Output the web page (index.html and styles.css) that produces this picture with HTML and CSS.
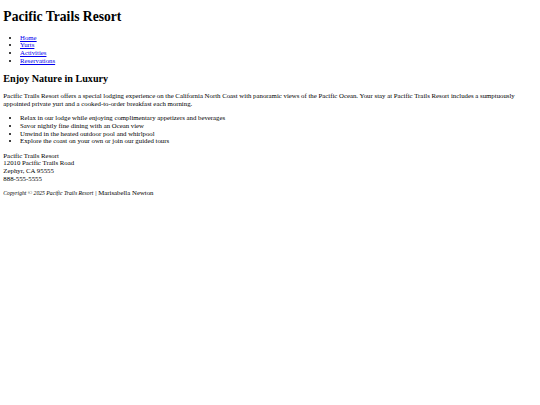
FILE: index.html
```html
<!DOCTYPE html>
<html lang="en">
<head>
<meta charset="utf-8">
<title>Pacific Trails Resort</title>
<link rel="stylesheet" href="styles.css">
</head>
<body class="page">
<header class="site-header">
<h1 class="site-title">Pacific Trails Resort</h1>
</header>
<nav class="site-nav">
<ul class="nav-list">
<li><a href="#">Home</a></li>
<li><a href="#">Yurts</a></li>
<li><a href="#">Activities</a></li>
<li><a href="#">Reservations</a></li>
</ul>
</nav>
<main class="content">
<h2 class="section-title">Enjoy Nature in Luxury</h2>
<p class="intro">Pacific Trails Resort offers a special lodging experience on the California North Coast with panoramic views of the Pacific Ocean. Your stay at Pacific Trails Resort includes a sumptuously appointed private yurt and a cooked-to-order breakfast each morning.</p>
<ul class="features">
<li>Relax in our lodge while enjoying complimentary appetizers and beverages</li>
<li>Savor nightly fine dining with an Ocean view</li>
<li>Unwind in the heated outdoor pool and whirlpool</li>
<li>Explore the coast on your own or join our guided tours</li>
</ul>
<div class="address">Pacific Trails Resort<br>12010 Pacific Trails Road<br>Zephyr, CA 95555<br>888-555-5555</div>
</main>
<footer class="site-footer">
<small class="copy"><i>Copyright &copy; 2025 Pacific Trails Resort</i></small> | Marisabella Newton
</footer>
</body>
</html>
```
FILE: styles.css
```css
html {
  background: #ffffff;
}
.page {
  margin: 3.33px;
  font-family: "Liberation Serif", "Times New Roman", serif;
  font-size: 6.8px;
  line-height: 7.67px;
  color: #000000;
}
.site-title {
  font-size: 13.6px;
  line-height: 15.43px;
  font-weight: bold;
  margin: 5.9px 0 8.94px;
}
.nav-list,
.features {
  margin: 6.67px 0;
  padding-left: 16.7px;
  list-style: disc;
}
.nav-list a {
  color: #0000ee;
  text-decoration: underline;
}
.section-title {
  font-size: 10.15px;
  line-height: 11.5px;
  font-weight: bold;
  margin: 8.3px 0;
}
.intro {
  margin: 6.67px 0;
}
.address {
  margin: 0;
}
.site-footer {
  margin-top: 6.67px;
}
.copy {
  font-size: 5.7px;
}
```
